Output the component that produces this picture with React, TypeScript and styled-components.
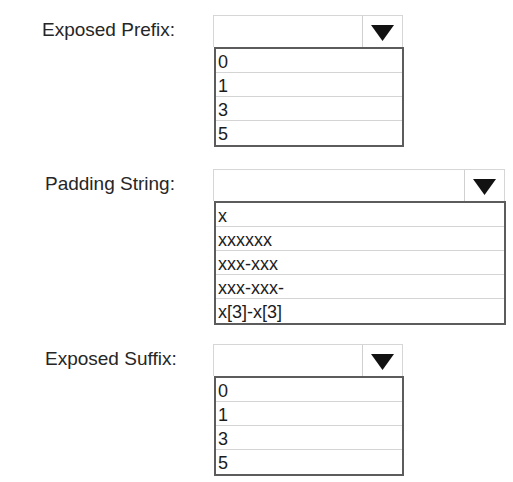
import React from "react";
import styled, { createGlobalStyle } from "styled-components";

const Global = createGlobalStyle`
  html, body { margin: 0; padding: 0; background: #ffffff; }
  body { font-family: "Liberation Sans", Arial, sans-serif; color: #1e1e1e; }
`;

const Page = styled.div`
  width: 513px;
  height: 482px;
  box-sizing: border-box;
  padding-top: 15px;
  display: flex;
  flex-direction: column;
  gap: 22px;
  overflow: hidden;
`;

const Group = styled.div<{ $gapAfter?: number }>`
  display: flex;
  align-items: flex-start;
  margin-bottom: ${(p) => (p.$gapAfter !== undefined ? p.$gapAfter - 22 : 0)}px;
`;

const Label = styled.div<{ $indent: number }>`
  width: 213px;
  box-sizing: border-box;
  padding-left: ${(p) => p.$indent}px;
  height: 32px;
  line-height: 30px;
  font-size: 19px;
  color: #262626;
  white-space: nowrap;
`;

const Field = styled.div<{ $width: number }>`
  width: ${(p) => p.$width}px;
  display: flex;
  flex-direction: column;
`;

const SelectBox = styled.div`
  height: 32px;
  box-sizing: border-box;
  border: 1px solid #d6d6d6;
  border-bottom: none;
  background: #ffffff;
  display: flex;
  justify-content: flex-end;
`;

const Button = styled.div`
  width: 40px;
  box-sizing: border-box;
  border-left: 1px solid #d0d0d0;
  display: flex;
  align-items: center;
  justify-content: center;
  padding-top: 2px;
`;

const List = styled.div`
  margin-left: 1px;
  margin-right: -1px;
  border: 2px solid #5c5c5c;
  background: #ffffff;
  display: flex;
  flex-direction: column;
`;

const Row = styled.div`
  height: 24px;
  box-sizing: border-box;
  border-bottom: 1px solid #d4d4d4;
  padding-left: 2px;
  font-size: 18px;
  line-height: 27px;
  color: #1c1c1c;
  white-space: nowrap;
  overflow: hidden;
  &:last-child { border-bottom: none; }
`;

const Arrow = () => (
  <svg width="23" height="16" viewBox="0 0 23 16">
    <polygon points="0,0 23,0 11.5,16" fill="#121212" />
  </svg>
);

type DropProps = { label: string; indent: number; width: number; options: string[]; gapAfter?: number };

const Dropdown = ({ label, indent, width, options, gapAfter }: DropProps) => (
  <Group $gapAfter={gapAfter}>
    <Label $indent={indent}>{label}</Label>
    <Field $width={width}>
      <SelectBox>
        <Button>
          <Arrow />
        </Button>
      </SelectBox>
      <List>
        {options.map((o) => (
          <Row key={o}>{o}</Row>
        ))}
      </List>
    </Field>
  </Group>
);

export default function App() {
  return (
    <>
      <Global />
      <Page>
        <Dropdown label="Exposed Prefix:" indent={42} width={190} options={["0", "1", "3", "5"]} />
        <Dropdown
          label="Padding String:"
          indent={45}
          width={292}
          options={["x", "xxxxxx", "xxx-xxx", "xxx-xxx-", "x[3]-x[3]"]}
          gapAfter={19}
        />
        <Dropdown label="Exposed Suffix:" indent={45} width={190} options={["0", "1", "3", "5"]} />
      </Page>
    </>
  );
}
